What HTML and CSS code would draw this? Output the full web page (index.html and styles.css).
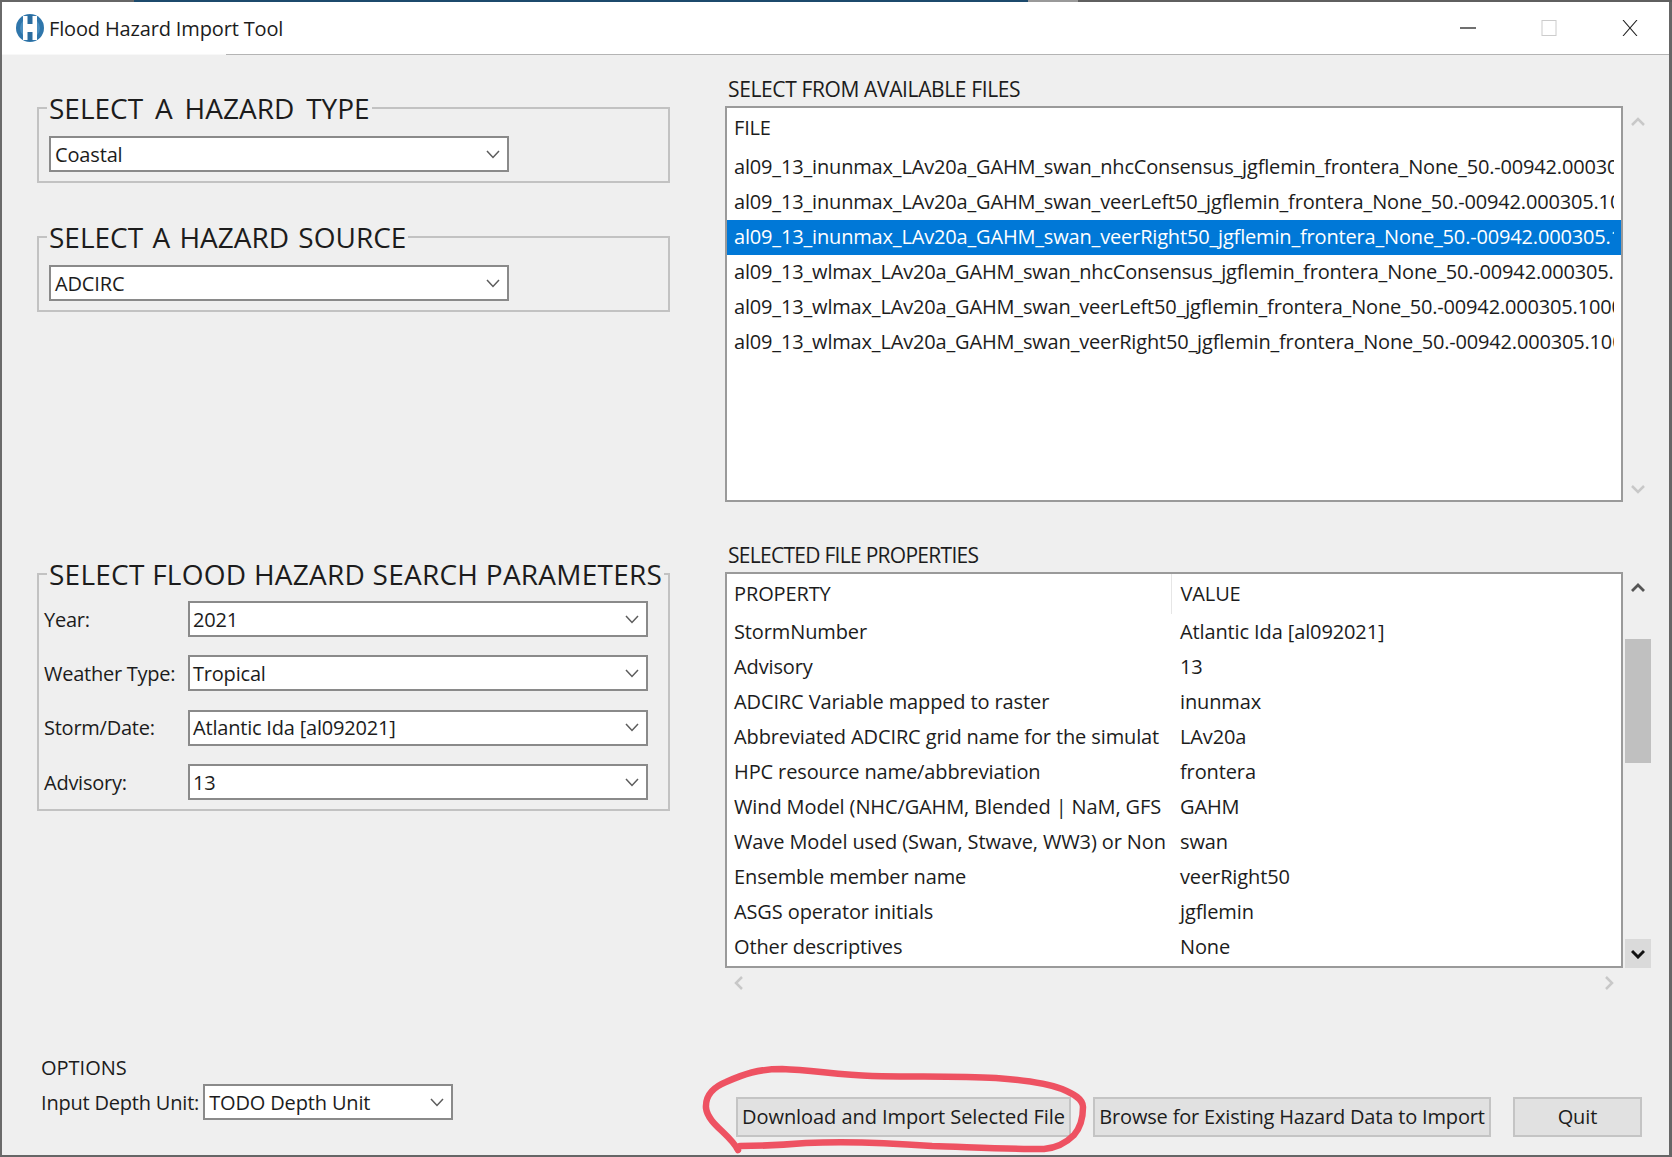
FILE: index.html
```html
<!DOCTYPE html>
<html>
<head>
    <title>Flood Hazard Import Tool</title>
    <link rel="stylesheet" href="styles.css">
</head>
<body>
<svg class="defs" width="0" height="0">
    <symbol id="chev" viewBox="0 0 14 9"><path d="M1 1l6 6.500 6-6.500" fill="none" stroke="#5c5c5c" stroke-width="1.500"/></symbol>
</svg>

<div class="topstrip">
    <span class="strip-a"></span><span class="strip-b"></span><span class="strip-c"></span><span class="strip-d"></span>
</div>

<div class="window">
    <div class="titlebar">
        <svg class="appicon" width="30" height="30" viewBox="0 0 30 30">
            <circle cx="15" cy="15" r="14" fill="#2f76ab"/>
            <circle cx="15" cy="15" r="10" fill="#4b8fc0"/>
            <rect x="8" y="3" width="14" height="24" fill="#fff"/>
            <rect x="12.500" y="2" width="5" height="9" fill="#2a6c9f"/>
            <rect x="12.500" y="19" width="5" height="9" fill="#2a6c9f"/>
        </svg>
        <span class="title">Flood Hazard Import Tool</span>
        <div class="winbtns">
            <svg width="16" height="16" viewBox="0 0 16 16"><path d="M0 8h16" stroke="#222" stroke-width="1.300"/></svg>
            <svg width="16" height="16" viewBox="0 0 16 16"><rect x="1" y="0.500" width="14" height="15" fill="none" stroke="#ccc"/></svg>
            <svg width="16" height="16" viewBox="0 0 16 16"><path d="M1 0l14 16M15 0L1 16" stroke="#222" stroke-width="1.100" fill="none"/></svg>
        </div>
    </div>
    <div class="titleline"></div>

    <div class="main">
        <div class="left">
            <fieldset class="group">
                <legend class="legend-type">SELECT A HAZARD TYPE</legend>
                <div class="combo wide"><span>Coastal</span><svg class="chev"><use href="#chev"/></svg></div>
            </fieldset>
            <fieldset class="group second">
                <legend>SELECT A HAZARD SOURCE</legend>
                <div class="combo wide"><span>ADCIRC</span><svg class="chev"><use href="#chev"/></svg></div>
            </fieldset>
            <fieldset class="group third">
                <legend>SELECT FLOOD HAZARD SEARCH PARAMETERS</legend>
                <div class="params">
                    <label>Year:</label>
                    <div class="combo"><span>2021</span><svg class="chev"><use href="#chev"/></svg></div>
                    <label>Weather Type:</label>
                    <div class="combo"><span>Tropical</span><svg class="chev"><use href="#chev"/></svg></div>
                    <label>Storm/Date:</label>
                    <div class="combo"><span>Atlantic Ida [al092021]</span><svg class="chev"><use href="#chev"/></svg></div>
                    <label>Advisory:</label>
                    <div class="combo"><span>13</span><svg class="chev"><use href="#chev"/></svg></div>
                </div>
            </fieldset>
        </div>

        <div class="right">
            <div class="caption">SELECT FROM AVAILABLE FILES</div>
            <div class="panel">
                <div class="box">
                    <div class="row head"><span>FILE</span></div>
                    <div class="row"><span>al09_13_inunmax_LAv20a_GAHM_swan_nhcConsensus_jgflemin_frontera_None_50.-00942.000305.1000</span></div>
                    <div class="row"><span>al09_13_inunmax_LAv20a_GAHM_swan_veerLeft50_jgflemin_frontera_None_50.-00942.000305.1000</span></div>
                    <div class="row selected"><span>al09_13_inunmax_LAv20a_GAHM_swan_veerRight50_jgflemin_frontera_None_50.-00942.000305.1000</span></div>
                    <div class="row"><span>al09_13_wlmax_LAv20a_GAHM_swan_nhcConsensus_jgflemin_frontera_None_50.-00942.000305.1000</span></div>
                    <div class="row"><span>al09_13_wlmax_LAv20a_GAHM_swan_veerLeft50_jgflemin_frontera_None_50.-00942.000305.1000</span></div>
                    <div class="row"><span>al09_13_wlmax_LAv20a_GAHM_swan_veerRight50_jgflemin_frontera_None_50.-00942.000305.1000</span></div>
                </div>
                <div class="vscroll">
                    <svg class="sb-arrow" viewBox="0 0 14 10"><path d="M1 8l6-6 6 6" fill="none" stroke="#c8c8c8" stroke-width="2.500"/></svg>
                    <svg class="sb-arrow" viewBox="0 0 14 10"><path d="M1 2l6 6 6-6" fill="none" stroke="#c8c8c8" stroke-width="2.500"/></svg>
                </div>
            </div>

            <div class="caption props-caption">SELECTED FILE PROPERTIES</div>
            <div class="panel">
                <div class="box">
                    <table class="props">
                        <thead>
                        <tr><th>PROPERTY</th><th>VALUE</th></tr>
                        </thead>
                        <tbody>
                        <tr><td>StormNumber</td><td>Atlantic Ida [al092021]</td></tr>
                        <tr><td>Advisory</td><td>13</td></tr>
                        <tr><td>ADCIRC Variable mapped to raster</td><td>inunmax</td></tr>
                        <tr><td>Abbreviated ADCIRC grid name for the simulat</td><td>LAv20a</td></tr>
                        <tr><td>HPC resource name/abbreviation</td><td>frontera</td></tr>
                        <tr><td>Wind Model (NHC/GAHM, Blended | NaM, GFS</td><td>GAHM</td></tr>
                        <tr><td>Wave Model used (Swan, Stwave, WW3) or Non</td><td>swan</td></tr>
                        <tr><td>Ensemble member name</td><td>veerRight50</td></tr>
                        <tr><td>ASGS operator initials</td><td>jgflemin</td></tr>
                        <tr><td>Other descriptives</td><td>None</td></tr>
                        </tbody>
                    </table>
                </div>
                <div class="vscroll active">
                    <div class="sb-up"><svg class="sb-arrow" viewBox="0 0 14 10"><path d="M1 8l6-6 6 6" fill="none" stroke="#555" stroke-width="2.800"/></svg></div>
                    <div class="thumb"></div>
                    <div class="sb-down"><svg class="sb-arrow" viewBox="0 0 14 10"><path d="M1 2l6 6 6-6" fill="none" stroke="#111" stroke-width="3"/></svg></div>
                </div>
            </div>
            <div class="hscroll">
                <svg class="sb-arrow-h" viewBox="0 0 10 14"><path d="M8 1L2 7l6 6" fill="none" stroke="#c8c8c8" stroke-width="2.500"/></svg>
                <svg class="sb-arrow-h" viewBox="0 0 10 14"><path d="M2 1l6 6-6 6" fill="none" stroke="#c8c8c8" stroke-width="2.500"/></svg>
            </div>
        </div>
    </div>

    <div class="footer">
        <div class="options">
            <div class="options-title">OPTIONS</div>
            <div class="options-row">
                <label>Input Depth Unit:</label>
                <div class="combo small"><span>TODO Depth Unit</span><svg class="chev"><use href="#chev"/></svg></div>
            </div>
        </div>
        <div class="buttons">
            <button class="btn first">Download and Import Selected File</button>
            <button class="btn browse">Browse for Existing Hazard Data to Import</button>
            <button class="btn quit">Quit</button>
        </div>
    </div>
</div>

<!-- hand drawn marker around the download button -->
<svg class="scribble" width="1672" height="1157" viewBox="0 0 1672 1157">
    <path d="M738 1150C730 1134 708 1124 706 1108C705 1094 716 1086 726 1082C744 1074 758 1069 782 1069C812 1070 838 1075 872 1076C916 1077 958 1076 996 1078C1024 1080 1046 1083 1062 1089C1074 1094 1083 1099 1083 1107C1083 1118 1080 1128 1074 1135C1066 1143 1056 1148 1044 1149C1006 1149 968 1147 932 1146C892 1143 846 1141 806 1143C782 1145 760 1146 740 1146" fill="none" stroke="#ee5262" stroke-width="6.500" stroke-linecap="round"/>
</svg>
</body>
</html>
```

FILE: styles.css
```css
* { box-sizing: border-box; }
html, body { margin: 0; height: 100%; }
body {
    position: relative;
    width: 1672px;
    height: 1157px;
    overflow: hidden;
    display: flex;
    flex-direction: column;
    background: #efefef;
    color: #1c1c1c;
    font-family: "Open Sans", sans-serif;
    font-size: 20px;
}
.defs { position: absolute; }

.topstrip { display: flex; height: 2px; flex: none; }
.strip-a { width: 134px; background: #666; }
.strip-b { width: 894px; background: #1c4a6c; }
.strip-c { width: 50px; background: #999; }
.strip-d { flex: 1; background: #5f5f5f; }

.window {
    flex: 1;
    display: flex;
    flex-direction: column;
    min-height: 0;
    border-left: 2px solid #6a6a6a;
    border-right: 3px solid #666;
    border-bottom: 2px solid #666;
}
.titlebar {
    height: 52px;
    flex: none;
    display: flex;
    align-items: center;
    background: #fff;
    padding-left: 13px;
}
.appicon { flex: none; margin-right: 4px; }
.title { font-size: 20px; letter-spacing: -0.15px; }
.winbtns {
    margin-left: auto;
    display: flex;
    gap: 65px;
    padding-right: 31px;
}
.titleline { height: 1px; flex: none; margin-left: 224px; background: #b4b4b4; }
.titleline { box-shadow: -224px 0 0 #f8f8f8; }

.main { display: flex; flex: none; }
.left { width: 688px; padding: 38px 0 0 35px; flex: none; }
.right { width: 926px; margin-left: 35px; padding-top: 20px; }

.group {
    margin: 0;
    width: 633px;
    padding: 13px 8px 9px 10px;
    min-inline-size: 0;
    border: 2px solid #c2c2c2;
}
.group legend {
    margin-left: -2px;
    padding: 0 2px;
    font-size: 28px;
    line-height: 30px;
    word-spacing: 2px;
    white-space: nowrap;
}
.group .legend-type { word-spacing: 4.600px; }
.second { margin-top: 39px; }
.third { margin-top: 247px; padding: 12px 20px 9px 5px; }
.third legend { margin-left: 3px; letter-spacing: 0.25px; word-spacing: 0; }

.combo {
    height: 36px;
    display: flex;
    align-items: center;
    justify-content: space-between;
    padding: 0 7px 0 4px;
    background: #fff;
    border: 2px solid #8a8a8a;
    font-size: 20px;
    letter-spacing: -0.15px;
    white-space: nowrap;
}
.wide { width: 460px; }
.small { width: 250px; }
.chev { width: 14px; height: 9px; flex: none; }

.params {
    display: grid;
    grid-template-columns: 144px 460px;
    row-gap: 18.400px;
    align-items: center;
}
.params label { letter-spacing: -0.25px; }
.params .combo { padding-left: 3px; letter-spacing: -0.2px; }

.caption {
    padding-left: 3px;
    font-size: 21px;
    line-height: 28px;
    letter-spacing: -0.37px;
    margin-bottom: 3px;
}
.props-caption { margin-top: 39px; letter-spacing: -0.72px; }
.panel { display: flex; gap: 2px; height: 396px; }
.box {
    width: 898px;
    flex: none;
    overflow: hidden;
    background: #fff;
    border: 2px solid #9a9a9a;
}
.row {
    height: 35px;
    line-height: 34px;
    padding: 0 7px;
    white-space: nowrap;
    letter-spacing: -0.17px;
}
.row span { display: block; overflow: hidden; }
.row.head { height: 42px; line-height: 39px; }
.row.selected { background: #0078d7; color: #fff; }

.props { width: 100%; border-collapse: collapse; table-layout: fixed; }
.props th, .props td {
    padding: 0 6px 0 7px;
    overflow: hidden;
    white-space: nowrap;
    text-align: left;
    font-weight: normal;
    letter-spacing: -0.12px;
}
.props th { height: 40px; line-height: 34px; }
.props td { height: 35px; line-height: 34px; }
.props th:first-child, .props td:first-child { width: 444px; }
.props td:first-child { clip-path: inset(0 6px 0 0); }
.props th:last-child, .props td:last-child { padding-left: 9px; }
.props th:first-child { border-right: 1px solid #e6e6e6; }

.vscroll {
    width: 26px;
    flex: none;
    display: flex;
    flex-direction: column;
    align-items: center;
    justify-content: space-between;
    padding: 11px 0 8px;
}
.vscroll.active { padding: 0; justify-content: flex-start; }
.sb-arrow { width: 14px; height: 10px; display: block; }
.sb-up { height: 67px; padding-top: 11px; }
.thumb { width: 100%; height: 124px; background: #c0c0c0; }
.sb-down {
    margin-top: auto;
    width: 100%;
    height: 29px;
    display: flex;
    align-items: center;
    justify-content: center;
    background: #dadada;
}
.hscroll {
    width: 898px;
    display: flex;
    justify-content: space-between;
    padding: 8px 9px 0;
}
.sb-arrow-h { width: 10px; height: 14px; display: block; }

.footer {
    margin-top: auto;
    display: flex;
    padding: 0 27px 18px 39px;
}
.options-title { line-height: 28px; margin-bottom: 2px; }
.options-row { display: flex; align-items: center; gap: 4px; letter-spacing: -0.2px; }
.buttons { margin-left: auto; margin-top: 43px; display: flex; gap: 22px; }
.btn {
    height: 40px;
    padding: 0 0 2px;
    background: #e1e1e1;
    border: 2px solid #c4c4c4;
    color: #1c1c1c;
    font-family: inherit;
    font-size: 20px;
    letter-spacing: -0.07px;
}
.browse { letter-spacing: -0.17px; }
.first { width: 335px; }
.browse { width: 398px; }
.quit { width: 129px; }

.scribble { position: absolute; left: 0; top: 0; pointer-events: none; }
```
